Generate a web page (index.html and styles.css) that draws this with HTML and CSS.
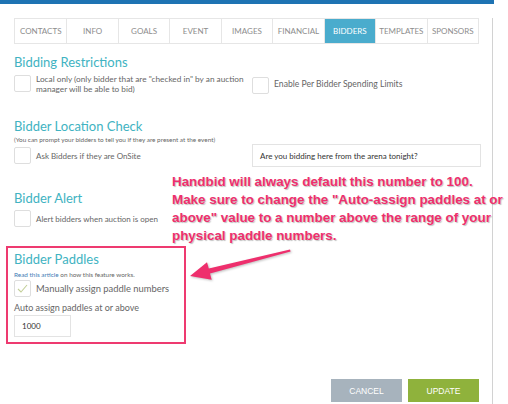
FILE: index.html
```html
<!DOCTYPE html>
<html lang="en">
<head>
    <meta charset="UTF-8">
    <meta name="viewport" content="width=device-width, initial-scale=1.0">
    <title>Auction Bidders</title>
    <link rel="stylesheet" href="styles.css">
</head>
<body>
<div class="topbar"></div>
<div class="panel">
    <ul class="tabs">
        <li>Contacts</li>
        <li>Info</li>
        <li>Goals</li>
        <li>Event</li>
        <li>Images</li>
        <li>Financial</li>
        <li class="active">Bidders</li>
        <li>Templates</li>
        <li>Sponsors</li>
    </ul>

    <h2 class="section-title first">Bidding Restrictions</h2>
    <div class="row restrictions">
        <label class="check">
            <span class="box"></span>
            <span class="check-text">Local only (only bidder that are "checked in" by an auction<br>manager will be able to bid)</span>
        </label>
        <label class="check spending">
            <span class="box"></span>
            <span class="check-text">Enable Per Bidder Spending Limits</span>
        </label>
    </div>

    <h2 class="section-title location">Bidder Location Check</h2>
    <p class="hint">(You can prompt your bidders to tell you if they are present at the event)</p>
    <div class="row onsite">
        <label class="check">
            <span class="box"></span>
            <span class="check-text small">Ask Bidders if they are OnSite</span>
        </label>
        <div class="field wide">Are you bidding here from the arena tonight?</div>
    </div>

    <h2 class="section-title alert">Bidder Alert</h2>
    <label class="check alert-row">
        <span class="box"></span>
        <span class="check-text small">Alert bidders when auction is open</span>
    </label>

    <div class="paddles">
        <h2 class="section-title">Bidder Paddles</h2>
        <p class="hint article"><a href="#">Read this article</a> on how this feature works.</p>
        <label class="check manual">
            <span class="box checked">
                <svg width="11" height="9" viewBox="0 0 11 9"><path d="M1 5 L4 8 L10 1" fill="none" stroke="#c3cf98" stroke-width="1.1"/></svg>
            </span>
            <span class="check-text big">Manually assign paddle numbers</span>
        </label>
        <p class="field-label">Auto assign paddles at or above</p>
        <div class="field short">1000</div>
    </div>

    <div class="actions">
        <button class="btn cancel">CANCEL</button>
        <button class="btn update">UPDATE</button>
    </div>
</div>

<p class="note">Handbid will always default this number to 100.<br>Make sure to change the "Auto-assign paddles at or<br>above" value to a number above the range of your<br>physical paddle numbers.</p>

<svg class="arrow" width="508" height="404" viewBox="0 0 508 404">
    <polygon points="290,249.4 208.8,268.6 207,262.3 190,276 211.7,279.7 210,273.4 290.6,251.6" fill="#ee2f6d"/>
</svg>
</body>
</html>
```

FILE: styles.css
```css
body {
    margin: 0;
    font-family: Lato, "Open Sans", sans-serif;
    color: #666;
    background-color: #ffffff;
    position: relative;
    height: 404px;
    overflow: hidden;
}

.topbar {
    width: 494px;
    height: 4px;
    background-color: #1e73b3;
}

.panel {
    width: 493px;
    height: 400px;
    box-sizing: border-box;
    padding: 0 13px 0 14px;
    border-right: 1px solid #d2d2d2;
}

/* Tabs */
.tabs {
    display: grid;
    grid-template-columns: repeat(9, 1fr);
    margin: 14px 0 0 0;
    padding: 0;
    list-style: none;
    border: 1px solid #e6e6e6;
    height: 26px;
    box-sizing: border-box;
}

.tabs li {
    display: flex;
    align-items: center;
    justify-content: center;
    font-size: 8px;
    text-transform: uppercase;
    color: #8d8d8d;
    border-left: 1px solid #e6e6e6;
}

.tabs li:first-child {
    border-left: none;
}

.tabs li.active {
    background-color: #4aaccd;
    color: #ffffff;
}

/* Sections */
.section-title {
    margin: 0;
    font-size: 13px;
    line-height: 16px;
    font-weight: 400;
    color: #41b3c2;
}

.section-title.first {
    margin-top: 10px;
}

.section-title.location {
    margin-top: 24px;
}

.section-title.alert {
    margin-top: 23px;
}

.hint {
    margin: 2px 0 0 0;
    font-size: 6.4px;
    line-height: 8px;
    color: #666;
}

.row {
    display: grid;
    grid-template-columns: 238px 1fr;
}

.restrictions {
    margin-top: 4px;
}

.check {
    display: flex;
    align-items: flex-start;
    gap: 5px;
}

.box {
    flex: none;
    width: 17px;
    height: 17px;
    box-sizing: border-box;
    border: 1px solid #dedede;
    border-radius: 2px;
    background-color: #ffffff;
    display: flex;
    align-items: center;
    justify-content: center;
}

.check-text {
    font-size: 8.6px;
    line-height: 10px;
    color: #666;
}

.restrictions .box {
    margin-top: 1px;
}

.restrictions .check-text {
    white-space: nowrap;
}

.restrictions .check:first-child .check-text {
    font-size: 8.25px;
}

.spending .box {
    margin-top: 3px;
}

.spending .check-text {
    margin-top: 5px;
}

.onsite .check {
    align-items: center;
    padding-top: 3px;
    align-self: start;
}

.check-text.small {
    font-size: 8px;
}

.check-text.big {
    font-size: 9.4px;
}

.onsite {
    height: 23px;
}

.field {
    box-sizing: border-box;
    border: 1px solid #e3e3e3;
    background-color: #ffffff;
    font-size: 8px;
    color: #333;
    display: flex;
    align-items: center;
    padding-left: 7px;
}

.field.wide {
    width: 229px;
    height: 23px;
}

.alert-row {
    margin-top: 4px;
    align-items: center;
}

/* Paddles highlight */
.paddles {
    width: 180px;
    box-sizing: border-box;
    margin: 19px 0 0 -8px;
    padding: 3px 6px 5px 6px;
    border: 2px solid #ee3a70;
}

.article {
    margin-top: 4px;
}

.article a {
    color: #3f7cb5;
    text-decoration: none;
}

.manual {
    margin-top: 1px;
    align-items: center;
}

.field-label {
    margin: 5px 0 0 0;
    font-size: 9px;
    line-height: 12px;
    color: #666;
}

.field.short {
    margin-top: 1px;
    width: 57px;
    height: 22px;
    font-size: 8px;
}

/* Buttons */
.actions {
    display: flex;
    justify-content: flex-end;
    gap: 6px;
    margin-top: 35px;
}

.btn {
    width: 71px;
    height: 23px;
    border: none;
    color: #ffffff;
    font-family: "Liberation Sans", Arial, sans-serif;
    font-size: 8.5px;
    cursor: pointer;
}

.cancel {
    background-color: #a7b3bd;
}

.update {
    background-color: #8fb23c;
}

/* Annotation */
.note {
    position: absolute;
    left: 172px;
    top: 173px;
    margin: 0;
    font-family: "Liberation Sans", Arial, sans-serif;
    font-weight: bold;
    font-size: 13.4px;
    line-height: 18px;
    color: #ee2f6d;
    white-space: nowrap;
    text-shadow: 1px 1px 1px rgba(0, 0, 0, 0.25);
}

.arrow {
    position: absolute;
    left: 0;
    top: 0;
    filter: drop-shadow(1px 1px 1px rgba(0, 0, 0, 0.25));
}
```
